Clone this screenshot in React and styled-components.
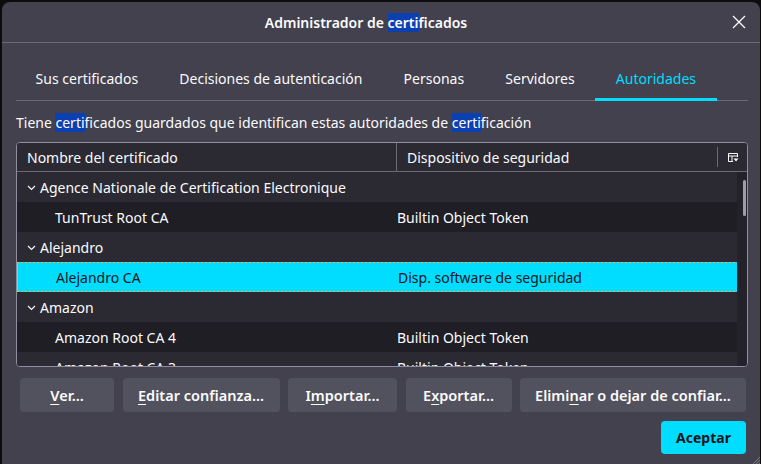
import React from 'react';
import styled, { createGlobalStyle } from 'styled-components';

const GlobalStyle = createGlobalStyle`
  html, body {
    margin: 0;
    padding: 0;
    background: #0c0c0d;
    font-family: "Noto Sans", "Open Sans", sans-serif;
    color: #fbfbfe;
  }
`;

const tabs = ['Sus certificados', 'Decisiones de autenticación', 'Personas', 'Servidores', 'Autoridades'];

const rows = [
  { group: true, name: 'Agence Nationale de Certification Electronique', device: '' },
  { name: 'TunTrust Root CA', device: 'Builtin Object Token' },
  { group: true, name: 'Alejandro', device: '' },
  { name: 'Alejandro CA', device: 'Disp. software de seguridad', selected: true },
  { group: true, name: 'Amazon', device: '' },
  { name: 'Amazon Root CA 4', device: 'Builtin Object Token' },
  { name: 'Amazon Root CA 3', device: 'Builtin Object Token' },
];

export default function App() {
  return (
    <>
      <GlobalStyle />
      <Window>
        <TitleBar>
          <Title>Administrador de <Mark>certi</Mark>ficados</Title>
          <CloseButton aria-label="Cerrar">
            <svg width="14" height="14" viewBox="0 0 14 14">
              <path d="M1 1 L13 13 M13 1 L1 13" stroke="#fbfbfe" strokeWidth="1.3" />
            </svg>
          </CloseButton>
        </TitleBar>

        <Content>
          <TabList>
            {tabs.map(t => (
              <Tab key={t} active={t === 'Autoridades'}>{t}</Tab>
            ))}
          </TabList>

          <Description>
            Tiene <Mark>certi</Mark>ficados guardados que identifican estas autoridades de <Mark>certi</Mark>ficación
          </Description>

          <Tree>
            <TreeHeader>
              <HeaderCell>Nombre del certificado</HeaderCell>
              <HeaderCell divider>Dispositivo de seguridad</HeaderCell>
              <PickerCell>
                <svg width="12" height="11" viewBox="0 0 12 11">
                  <path d="M1.5 1.5 H10.5 V5 M1.5 1.5 V9.5 H6 M1.5 4 H10.5 M5 4 V9.5" stroke="#fbfbfe" strokeWidth="1" fill="none" />
                  <path d="M6.5 6.5 H11.5 L9 9.5 Z" fill="#fbfbfe" />
                </svg>
              </PickerCell>
            </TreeHeader>
            <TreeBody>
              <RowList>
                {rows.map((r, i) => (
                  <Row key={r.name} odd={i % 2 === 1} selected={r.selected}>
                    <NameCell group={r.group}>
                      {r.group && (
                        <svg width="9" height="6" viewBox="0 0 9 6">
                          <path d="M1 1 L4.5 4.5 L8 1" stroke="#fbfbfe" strokeWidth="1.1" fill="none" />
                        </svg>
                      )}
                      {r.name}
                    </NameCell>
                    <DeviceCell>{r.device}</DeviceCell>
                  </Row>
                ))}
              </RowList>
              <ScrollTrack>
                <ScrollThumb />
              </ScrollTrack>
            </TreeBody>
          </Tree>

          <ButtonRow>
            <Button w={94}><u>V</u>er…</Button>
            <Button w={157}><u>E</u>ditar confianza…</Button>
            <Button w={109}>I<u>m</u>portar…</Button>
            <Button w={106}>E<u>x</u>portar…</Button>
            <Button w={226}>Elimi<u>n</u>ar o dejar de confiar…</Button>
          </ButtonRow>

          <Footer>
            <PrimaryButton>Aceptar</PrimaryButton>
          </Footer>
        </Content>

        <Grip width="8" height="8" viewBox="0 0 8 8">
          <path d="M8 1 L1 8 M8 4 L4 8 M8 7 L7 8" stroke="#8f8f9d" strokeWidth="0.8" />
        </Grip>
      </Window>
    </>
  );
}

const Window = styled.div`
  position: relative;
  margin: 2px 0 0 2px;
  width: 758px;
  height: 462px;
  background: #42414d;
  border-radius: 8px 8px 0 0;
  overflow: hidden;
  font-size: 14px;
`;

const TitleBar = styled.div`
  position: relative;
  height: 40px;
  border-bottom: 1px solid #6b6a75;
  display: flex;
  align-items: center;
  justify-content: center;
  padding-right: 30px;
`;

const Title = styled.div`
  font-weight: 600;
  font-size: 14px;
`;

const Mark = styled.span`
  background: #0b40b0;
`;

const CloseButton = styled.div`
  position: absolute;
  right: 14px;
  top: 13px;
  width: 14px;
  height: 14px;
  display: flex;
`;

const Content = styled.div`
  padding: 0 12px 0 14px;
`;

const TabList = styled.div`
  display: flex;
  margin-top: 16px;
  border-bottom: 1px solid #6b6a75;
  padding-left: 0;
`;

const Tab = styled.div`
  height: 42px;
  padding: 0 20.6px;
  display: flex;
  align-items: center;
  box-sizing: border-box;
  color: ${p => (p.active ? '#00ddff' : '#fbfbfe')};
  border-bottom: 3px solid ${p => (p.active ? '#00ddff' : 'transparent')};
  margin-bottom: -1px;

  &:first-child {
    margin-left: -1px;
  }
`;

const Description = styled.div`
  margin-top: 12px;
  line-height: 20px;
`;

const Tree = styled.div`
  margin-top: 9px;
  height: 225px;
  box-sizing: border-box;
  border: 1px solid #8f8f9d;
  border-radius: 4px;
  overflow: hidden;
  display: flex;
  flex-direction: column;
  background: #23222b;
`;

const TreeHeader = styled.div`
  display: grid;
  grid-template-columns: 379px 1fr 30px;
  height: 28px;
  flex-shrink: 0;
  background: #2b2a33;
  border-bottom: 1px solid #6b6a75;
`;

const HeaderCell = styled.div`
  display: flex;
  align-items: center;
  padding-left: 10px;
  border-left: ${p => (p.divider ? '1px solid #6b6a75' : 'none')};
`;

const PickerCell = styled.div`
  display: flex;
  align-items: center;
  justify-content: center;
  border-left: 1px solid #6b6a75;
  margin: 4px 0;
`;

const TreeBody = styled.div`
  flex: 1;
  display: flex;
  min-height: 0;
`;

const RowList = styled.div`
  flex: 1;
  overflow: hidden;
`;

const Row = styled.div`
  display: grid;
  grid-template-columns: 370px 1fr;
  height: 30px;
  box-sizing: border-box;
  align-items: center;
  background: ${p => (p.selected ? '#00ddff' : p.odd ? '#1f1e25' : '#2b2a33')};
  color: ${p => (p.selected ? '#15141a' : '#fbfbfe')};
  border: ${p => (p.selected ? '1px dashed #ffb238' : 'none')};
  border-image: ${p => (p.selected ? 'repeating-linear-gradient(90deg, #ffb238 0 2px, #00ddff 2px 4px) 1' : 'none')};
`;

const NameCell = styled.div`
  display: flex;
  align-items: center;
  gap: 4px;
  padding-left: ${p => (p.group ? '10px' : '38px')};
  white-space: nowrap;

  svg {
    margin-top: 1px;
  }
`;

const DeviceCell = styled.div`
  padding-left: 10px;
  white-space: nowrap;
`;

const ScrollTrack = styled.div`
  width: 10px;
  background: #23222b;
  position: relative;
`;

const ScrollThumb = styled.div`
  position: absolute;
  left: 6px;
  top: 8px;
  width: 3px;
  height: 36px;
  border-radius: 2px;
  background: #9e9ea8;
`;

const ButtonRow = styled.div`
  display: flex;
  gap: 8.5px;
  margin-top: 11px;
  padding-left: 4px;
`;

const Button = styled.div`
  width: ${p => p.w}px;
  flex-shrink: 0;
  height: 34px;
  box-sizing: border-box;
  border-radius: 4px;
  background: #52515e;
  display: flex;
  align-items: center;
  justify-content: center;
  font-weight: 600;
  font-size: 14.5px;
  color: #fbfbfe;

  u {
    text-underline-offset: 3px;
  }
`;

const Footer = styled.div`
  display: flex;
  justify-content: flex-end;
  margin-top: 9px;
  padding-right: 2px;
`;

const PrimaryButton = styled.div`
  width: 85px;
  height: 33px;
  border-radius: 4px;
  background: #00ddff;
  color: #15141a;
  font-weight: 700;
  display: flex;
  align-items: center;
  justify-content: center;
`;

const Grip = styled.svg`
  position: absolute;
  right: 0;
  bottom: 0;
`;
